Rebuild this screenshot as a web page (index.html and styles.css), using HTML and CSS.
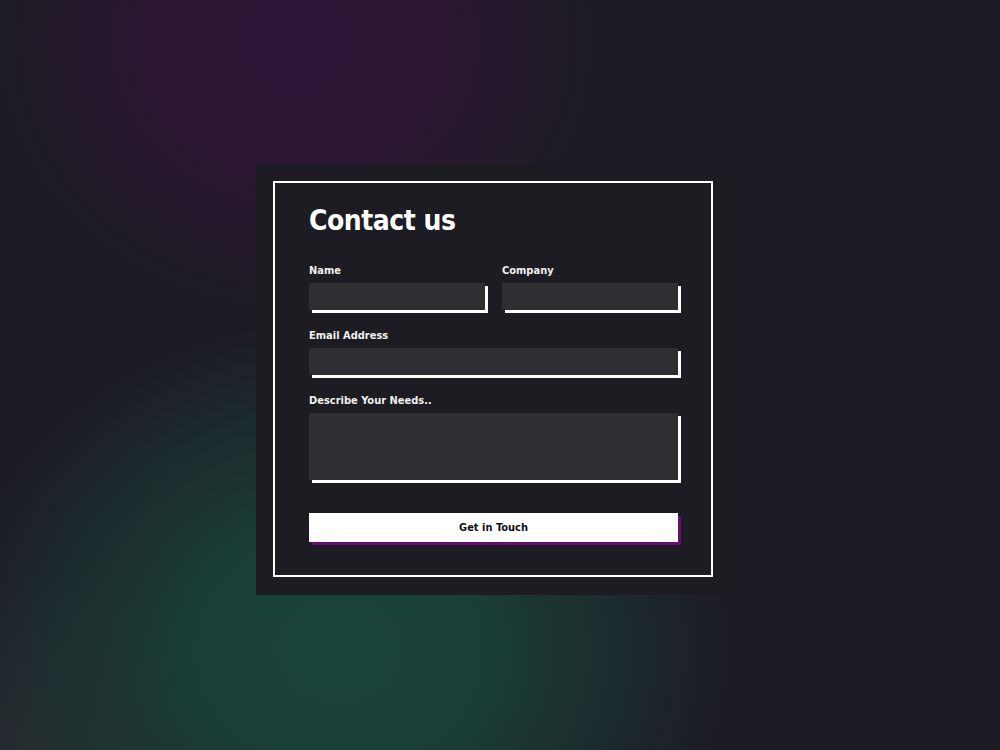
FILE: index.html
```html
<!DOCTYPE html>
<html lang="en">
<head>
  <meta charset="UTF-8" />
  <meta name="viewport" content="width=device-width, initial-scale=1.0" />
  <title>Contact us</title>
  <link rel="stylesheet" href="styles.css">
</head>
<body>
  <div class="card">
    <form class="frame">
      <h1>Contact us</h1>
      <div class="row">
        <div class="field">
          <label for="name">Name</label>
          <input type="text" id="name">
        </div>
        <div class="field">
          <label for="company">Company</label>
          <input type="text" id="company">
        </div>
      </div>
      <div class="field">
        <label for="email">Email Address</label>
        <input type="email" id="email">
      </div>
      <div class="field last">
        <label for="needs">Describe Your Needs..</label>
        <textarea id="needs"></textarea>
      </div>
      <button type="button">Get in Touch</button>
    </form>
  </div>
</body>
</html>
```

FILE: styles.css
```css
html, body {
  height: 100%;
}
body {
  margin: 0;
  font-family: "DejaVu Sans Condensed", "DejaVu Sans", sans-serif;
  color: #fff;
  background:
    radial-gradient(ellipse 300px 270px at 295px 40px, #2f1538 0%, #2e1636 40%, rgba(46, 22, 54, 0) 100%),
    radial-gradient(ellipse 390px 330px at 340px 650px, #19443a 0%, #1a3f38 35%, rgba(26, 63, 56, 0) 100%),
    radial-gradient(ellipse 260px 200px at 40px 770px, #28292f 0%, rgba(40, 41, 47, 0) 100%),
    #1d1c24;
  display: flex;
  align-items: center;
  justify-content: center;
  overflow: hidden;
}
.card {
  background: #1c1c22;
  padding: 17px 24px 18px 17px;
  margin-left: -7px;
  margin-top: 9px;
}
.frame {
  width: 369px;
  border: 2px solid #fff;
  padding: 21px 33px 33px 34px;
  display: flex;
  flex-direction: column;
}
h1 {
  margin: 0 0 26px;
  font-size: 28px;
  line-height: 34px;
  letter-spacing: -0.5px;
  font-weight: bold;
}
.row {
  display: flex;
  gap: 17px;
}
.row .field {
  flex: 1;
}
.field {
  display: flex;
  flex-direction: column;
  margin-bottom: 19px;
}
.field.last {
  margin-bottom: 33px;
}
label {
  font-size: 11px;
  font-weight: bold;
  line-height: 14px;
  margin-bottom: 5px;
  color: #f0f0f0;
}
input, textarea {
  display: block;
  width: 100%;
  box-sizing: border-box;
  background: #2e2e33;
  border: none;
  outline: none;
  color: #fff;
  font-family: inherit;
  height: 27px;
  margin: 0;
  padding: 0 8px;
  box-shadow: 3px 3px 0 #fff;
  resize: none;
}
textarea {
  height: 67px;
}
button {
  width: 100%;
  height: 29px;
  padding: 0;
  background: #fff;
  border: none;
  color: #111;
  font-family: inherit;
  font-size: 11px;
  font-weight: bold;
  box-shadow: 3px 3px 0 #6c0a76;
  cursor: pointer;
}
```
